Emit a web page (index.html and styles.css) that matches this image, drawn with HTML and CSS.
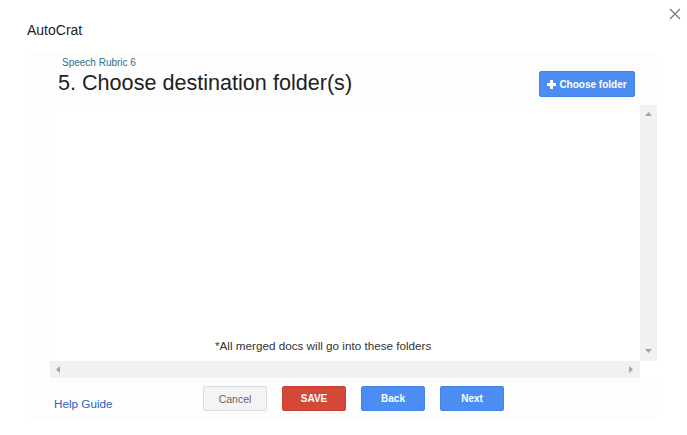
FILE: index.html
```html
<!DOCTYPE html>
<html>
<head>
<meta charset="utf-8">
<link rel="stylesheet" href="styles.css">
</head>
<body>
<div class="dialog">
  <div class="title">AutoCrat</div>
  <button class="close" aria-label="Close">
    <svg width="12" height="12" viewBox="0 0 12 12"><path d="M1 1 L11 11 M11 1 L1 11" stroke="#777" stroke-width="1.2" fill="none"/></svg>
  </button>
  <div class="panel">
    <div class="header">
      <div class="heading-block">
        <div class="subtitle">Speech Rubric 6</div>
        <h1 class="heading">5. Choose destination folder(s)</h1>
      </div>
      <button class="btn btn-blue btn-choose">
        <svg class="plus" width="9" height="9" viewBox="0 0 9 9"><path d="M3 0 H6 V3 H9 V6 H6 V9 H3 V6 H0 V3 H3 Z" fill="#fff"/></svg>
        Choose folder
      </button>
    </div>
    <div class="scroll">
      <div class="content">
        <div class="note">*All merged docs will go into these folders</div>
      </div>
      <div class="vbar">
        <svg width="7" height="4" viewBox="0 0 7 4"><path d="M0 4 L3.5 0 L7 4 Z" fill="#a3a3a3"/></svg>
        <svg width="7" height="4" viewBox="0 0 7 4"><path d="M0 0 L3.5 4 L7 0 Z" fill="#a3a3a3"/></svg>
      </div>
      <div class="hbar">
        <svg width="4" height="7" viewBox="0 0 4 7"><path d="M4 0 L0 3.5 L4 7 Z" fill="#a3a3a3"/></svg>
        <svg width="4" height="7" viewBox="0 0 4 7"><path d="M0 0 L4 3.5 L0 7 Z" fill="#a3a3a3"/></svg>
      </div>
      <div class="corner"></div>
    </div>
    <div class="footer">
      <a class="help" href="#">Help Guide</a>
      <div class="actions">
        <button class="btn btn-gray">Cancel</button>
        <button class="btn btn-red">SAVE</button>
        <button class="btn btn-blue">Back</button>
        <button class="btn btn-blue">Next</button>
      </div>
    </div>
  </div>
</div>
</body>
</html>
```

FILE: styles.css
```css
* { box-sizing: border-box; }
html, body { margin: 0; padding: 0; background: #fff; }
body { font-family: "Liberation Sans", Arial, sans-serif; color: #222; }

.dialog {
  position: relative;
  width: 687px;
  height: 435px;
  overflow: hidden;
}

.title {
  height: 52px;
  padding: 22px 0 0 27px;
  font-size: 14px;
  line-height: 16px;
  color: #222;
}

.close {
  position: absolute;
  top: 8px;
  left: 669px;
  width: 12px;
  height: 12px;
  padding: 0;
  border: 0;
  background: transparent;
  display: block;
}
.close svg { display: block; }

.panel {
  margin-left: 26px;
  width: 631px;
  height: 368px;
  padding-left: 24px;
  background: #fdfdfd;
}

.header {
  display: flex;
  justify-content: space-between;
  align-items: flex-start;
  padding-top: 5px;
  padding-right: 22px;
  margin-bottom: 8px;
}

.subtitle {
  margin-left: 12px;
  font-size: 10px;
  line-height: 11px;
  color: #2e6d8e;
}

.heading {
  margin: 2px 0 0 8px;
  font-size: 21.6px;
  line-height: 26px;
  font-weight: normal;
  color: #222;
}

.btn {
  font-family: "Liberation Sans", Arial, sans-serif;
  font-size: 10px;
  font-weight: bold;
  height: 25px;
  width: 64px;
  border-radius: 2px;
  border: 1px solid transparent;
  color: #fff;
  padding: 0;
  display: flex;
  align-items: center;
  justify-content: center;
}

.btn-blue { background: #4b8df2; border-color: #4484ea; }
.btn-red { background: #d4483a; border-color: #c9402f; }
.btn-gray {
  background: #f4f4f4;
  border-color: #dcdcdc;
  color: #666;
  font-weight: normal;
  font-size: 10.5px;
}

.btn-choose {
  width: 96px;
  height: 26px;
  margin-top: 14px;
  gap: 3px;
}
.plus { display: block; }

.scroll {
  display: grid;
  grid-template-columns: 590px 17px;
  grid-template-rows: 256px 17px;
}

.content {
  background: #fff;
  display: flex;
  flex-direction: column;
  justify-content: flex-end;
  padding: 0 0 8px 165px;
}

.note {
  font-size: 11.7px;
  line-height: 14px;
  color: #333;
}

.vbar {
  background: #f1f1f1;
  display: flex;
  flex-direction: column;
  justify-content: space-between;
  align-items: center;
  padding: 7px 0 8px;
}
.vbar svg, .hbar svg { display: block; }

.hbar {
  background: #f1f1f1;
  display: flex;
  justify-content: space-between;
  align-items: center;
  padding: 0 7px 0 6px;
}

.corner { background: #fff; }

.footer {
  display: flex;
  align-items: flex-start;
  padding: 8px 0 0 4px;
}

.help {
  width: 149px;
  margin-top: 11px;
  font-size: 11.7px;
  line-height: 14px;
  color: #2f62bb;
  text-decoration: none;
}

.actions {
  display: flex;
  gap: 15px;
}
```
